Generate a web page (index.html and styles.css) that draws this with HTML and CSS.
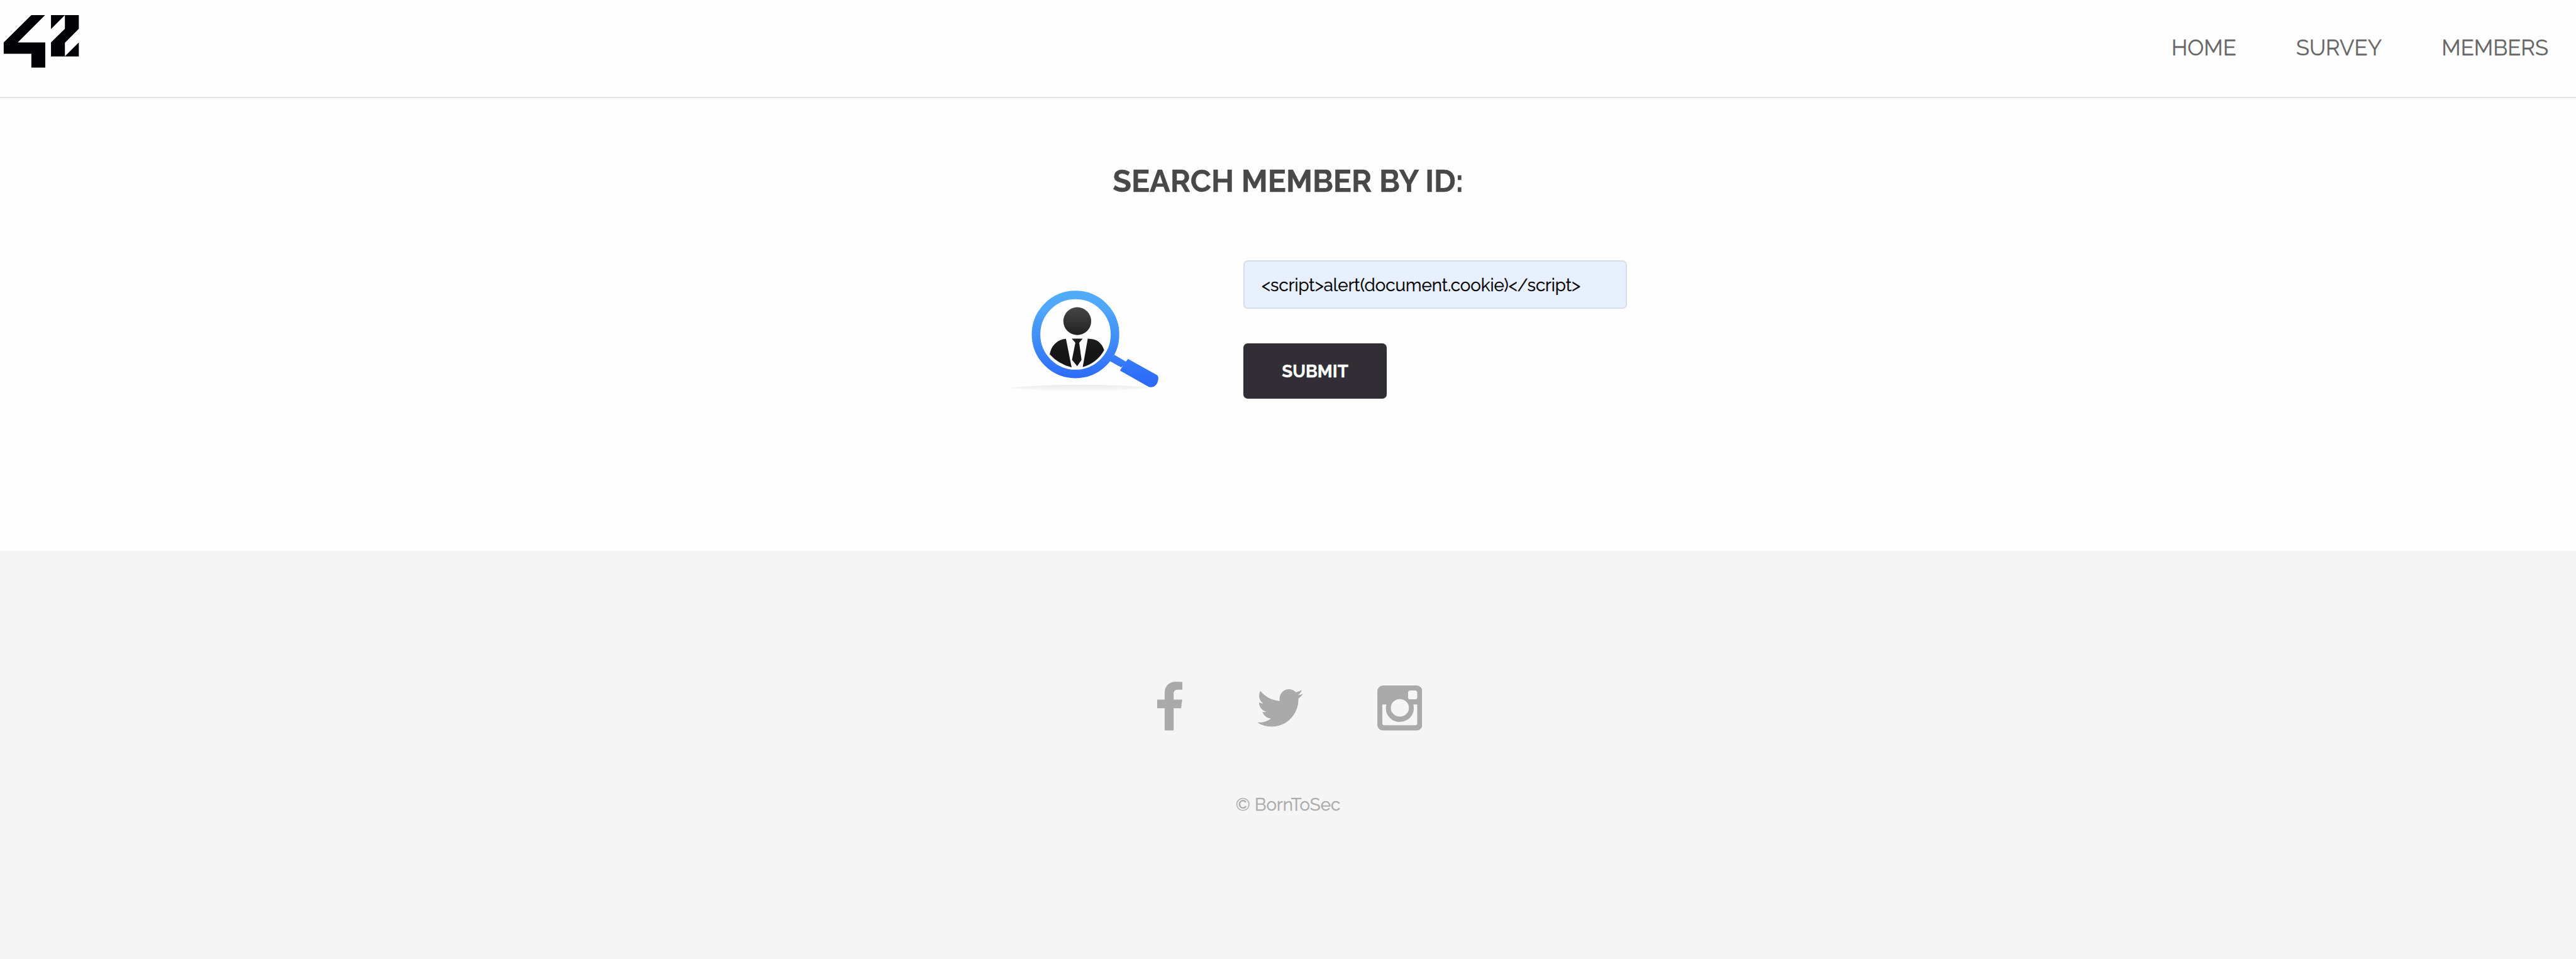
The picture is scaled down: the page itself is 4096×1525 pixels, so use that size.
FILE: index.html
```html
<!DOCTYPE html>
<html lang="en">
<head>
<meta charset="utf-8">
<title>BornToSec - Members</title>
<link rel="stylesheet" href="styles.css">
</head>
<body>
<header class="header">
  <a class="logo" href="#" aria-label="42">
    <svg viewBox="0 0 720 528" width="192" height="140.8">
      <path d="M187 90H269L106 253H270V403H187V321H22V253ZM304 90H470V172L387 255V336L470 253V337H304V253L387 172V90L304 173Z"/>
    </svg>
  </a>
  <nav class="nav">
    <a href="#">HOME</a>
    <a href="#">SURVEY</a>
    <a href="#">MEMBERS</a>
  </nav>
</header>
<main class="main">
  <h2 class="title">SEARCH MEMBER BY ID:</h2>
  <div class="search">
    <svg class="search-icon" viewBox="0 0 1020 750" width="272" height="200" aria-hidden="true">
      <defs>
        <linearGradient id="lens" gradientUnits="userSpaceOnUse" x1="0" y1="84" x2="0" y2="660">
          <stop offset="0" stop-color="#52acf9"/><stop offset=".2" stop-color="#4fa6fa"/><stop offset=".85" stop-color="#3070f8"/><stop offset="1" stop-color="#2d67f6"/>
        </linearGradient>
        <linearGradient id="man" gradientUnits="userSpaceOnUse" x1="0" y1="182" x2="0" y2="540">
          <stop offset="0" stop-color="#464646"/><stop offset=".48" stop-color="#202020"/><stop offset=".75" stop-color="#151515"/><stop offset="1" stop-color="#161616"/>
        </linearGradient>
        <linearGradient id="floor" gradientUnits="userSpaceOnUse" x1="0" y1="644" x2="0" y2="684">
          <stop offset="0" stop-color="#ebebeb"/><stop offset="1" stop-color="#fbfbfb"/>
        </linearGradient>
      </defs>
      <path fill="url(#floor)" d="M12 663Q220 644 440 644T870 663Q650 684 440 684T12 663Z"/>
      <circle cx="413" cy="344.500" r="235.500" fill="none" stroke="url(#lens)" stroke-width="51"/>
      <path fill="url(#lens)" d="M645 466L713 506L726 490L901 588Q909 598 906 615Q901 644 880 655Q864 661 850 657L678 560L698 527L686 541L618 503Z"/>
      <g fill="url(#man)">
        <circle cx="423.500" cy="265" r="83"/>
        <path d="M356 370L390 541Q312 521 259 463Q266 422 292 398Q318 372 356 370Z"/>
        <path d="M486 369Q528 371 546 384Q572 402 584 438Q542 514 456 539Z"/>
        <path d="M391 369H456L435 394L449 496L423 533L392 496L412 394Z"/>
      </g>
    </svg>
    <form class="form">
      <input class="field" type="text" value="&lt;script&gt;alert(document.cookie)&lt;/script&gt;" aria-label="Member id">
      <button class="submit" type="button">SUBMIT</button>
    </form>
  </div>
</main>
<footer class="footer">
  <div class="social">
    <a href="#" aria-label="Facebook"><svg class="facebook" viewBox="479 0 864 1664"><path d="M1343 12v264h-157q-86 0-116 36t-30 108v189h293l-39 296h-254v759h-306v-759h-255v-296h255v-218q0-186 104-288.500t277-102.500q147 0 228 12z"/></svg></a>
    <a href="#" aria-label="Twitter"><svg class="twitter" viewBox="108 256 1576 1280"><path d="M1684 408q-67 98-162 167 1 14 1 42 0 130-38 259.500t-115.500 248.500-184.500 210.500-258 146-323 54.500q-271 0-496-145 35 4 78 4 225 0 401-138-105-2-188-64.500t-114-159.500q33 5 61 5 43 0 85-11-112-23-185.500-111.500t-73.500-205.500v-4q68 38 146 41-66-44-105-115t-39-154q0-88 44-163 121 149 294.500 238.500t371.500 99.500q-8-38-8-74 0-134 94.500-228.500t228.500-94.500q140 0 236 102 109-21 205-78-37 115-142 178 93-10 186-50z"/></svg></a>
    <a href="#" aria-label="Instagram"><svg class="instagram" viewBox="128 128 1536 1536"><path d="M1490 1426v-648h-135q20 63 20 131 0 126-64 232.500t-174 168.500-240 62q-197 0-337-135.500t-140-327.500q0-68 20-131h-141v648q0 26 17.500 43.500t43.500 17.500h1069q25 0 43-17.500t18-43.500zm-284-533q0-124-90.500-211.500t-218.500-87.500q-127 0-217.500 87.500t-90.500 211.500 90.500 211.500 217.500 87.500q128 0 218.500-87.500t90.500-211.500zm284-360v-165q0-28-20-48.500t-49-20.500h-174q-29 0-49 20.500t-20 48.500v165q0 29 20 49t49 20h174q29 0 49-20t20-49zm174-208v1142q0 81-58 139t-139 58h-1142q-81 0-139-58t-58-139v-1142q0-81 58-139t139-58h1142q81 0 139 58t58 139z"/></svg></a>
  </div>
  <p class="copyright">© BornToSec</p>
</footer>
</body>
</html>
```
FILE: styles.css
```css
* { box-sizing: border-box; }

body {
  margin: 0;
  min-height: 1525px;
  display: flex;
  flex-direction: column;
  background: #fefefe;
  color: #666;
  font: 400 27.73px/1.5 Raleway, Lato, sans-serif;
  -webkit-text-stroke: .35px currentColor;
}

a { color: inherit; text-decoration: none; }
svg { display: block; }

.header {
  height: 156px;
  display: flex;
  justify-content: space-between;
  border-bottom: 2px solid #e4e4e4;
  box-shadow: 0 2px 4px rgba(0, 0, 0, .03);
}

.logo { fill: #020106; }

.nav {
  display: flex;
  gap: 95px;
  padding-right: 44px;
  font-size: 34.67px;
  line-height: 152px;
}

.main {
  height: 720px;
  padding-top: 96px;
}

.title {
  margin: 0 0 90px;
  color: #484848;
  font-size: 48.53px;
  font-weight: 700;
  line-height: 72px;
  text-align: center;
}

.search {
  display: flex;
  gap: 105px;
  padding-left: 1600px;
}

.search-icon { margin-top: 26px; }

.form {
  display: flex;
  flex-direction: column;
  align-items: flex-start;
  gap: 55px;
}

.field {
  width: 610px;
  height: 77px;
  padding: 0 27px;
  border: 2px solid #d6dde7;
  border-radius: 7px;
  background: #e8f0fe;
  color: #000;
  font: inherit;
  -webkit-text-stroke: .35px currentColor;
}

.submit {
  width: 228px;
  height: 88px;
  padding: 2px 0 0;
  border: 0;
  border-radius: 7px;
  background: #322e36;
  color: #fff;
  font: inherit;
  font-weight: 700;
  -webkit-text-stroke: .35px currentColor;
}

.footer {
  flex: 1;
  padding-top: 207.5px;
  background: #f5f5f5;
  color: #aaa;
  text-align: center;
}

.social {
  display: flex;
  justify-content: center;
  align-items: flex-end;
  gap: 118.500px;
  height: 78px;
  padding-left: 5px;
  fill: #aaa;
}

.facebook { width: 40.300px; height: 77.600px; }
.twitter { width: 73px; height: 59.500px; margin: 0 -1px 6px 1px; }
.instagram { width: 71.600px; height: 71.600px; }

.copyright {
  margin: 96px 0 0;
  line-height: 42px;
}
```
